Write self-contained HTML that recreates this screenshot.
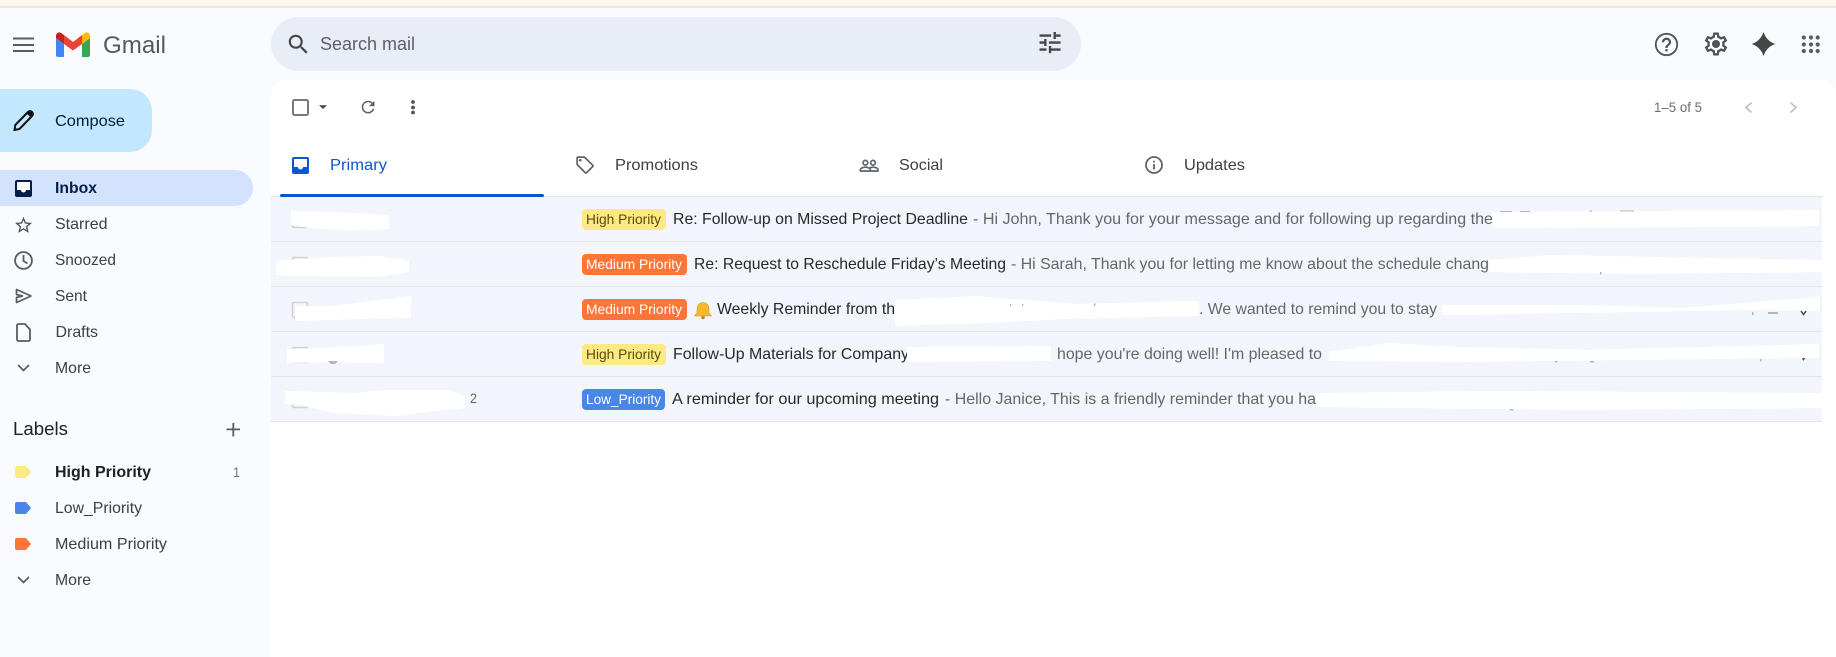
<!DOCTYPE html>
<html><head><meta charset="utf-8"><title>Gmail</title>
<style>
html,body{margin:0;padding:0;background:#f9fbff;width:1836px;height:657px;overflow:hidden}
svg{display:block;filter:blur(.35px)}
text{font-family:"Liberation Sans",sans-serif;font-size:16px;fill:#3c4043}
.s{fill:#26282b}.g{fill:#63676b}.n{fill:#3c4043}
</style></head><body>
<svg width="1836" height="657" viewBox="0 0 1836 657" xmlns="http://www.w3.org/2000/svg">
<defs>
<path id="chev" d="M-5.500-2.700 0 2.700 5.500-2.700" fill="none" stroke="#5a5d60" stroke-width="1.700"/>
</defs>
<rect width="1836" height="657" fill="#f9fbff"/>
<rect width="1836" height="6" fill="#fff5f0"/>
<rect y="6" width="1836" height="2" fill="#f9e1d8"/>

<!-- header -->
<g fill="#5a5d60"><rect x="13" y="37.500" width="21" height="2"/><rect x="13" y="44" width="21" height="2"/><rect x="13" y="50" width="21" height="2"/></g>
<path d="M58 57h6V44l-8-6v17a2 2 0 0 0 2 2z" fill="#4285f4"/>
<path d="M82 57h6a2 2 0 0 0 2-2V38l-8 6z" fill="#34a853"/>
<path d="M64 44V35l9 7 9-7v9l-9 6.500z" fill="#ea4335"/>
<path d="M64 35l-3-2c-2-1.500-5 0-5 3v2l8 6z" fill="#c5221f"/>
<path d="M82 35l3-2c2-1.500 5 0 5 3v2l-8 6z" fill="#fbbc04"/>
<text x="103" y="53" style="font-size:24px;fill:#55595d" textLength="63" lengthAdjust="spacingAndGlyphs">Gmail</text>

<rect x="271" y="17" width="810" height="54" rx="27" fill="#e9eef6"/>
<path transform="translate(285.500 31.500) scale(1.08)" fill="#444746" d="M15.500 14h-.79l-.28-.27A6.471 6.471 0 0 0 16 9.500 6.500 6.500 0 1 0 9.500 16c1.610 0 3.090-.59 4.230-1.570l.27.28v.79l5 4.990L20.490 19l-4.990-5zm-6 0C7.010 14 5 11.990 5 9.500S7.010 5 9.500 5 14 7.010 14 9.500 11.990 14 9.500 14z"/>
<text x="320" y="50" style="font-size:18px;fill:#5b5f63" textLength="95" lengthAdjust="spacingAndGlyphs">Search mail</text>
<path transform="translate(1036 28.500) scale(1.17)" fill="#444746" d="M3 17v2h6v-2H3zM3 5v2h10V5H3zm10 16v-2h8v-2h-8v-2h-2v6h2zM7 9v2H3v2h4v2h2V9H7zm14 4v-2H11v2h10zm-6-4h2V7h4V5h-4V3h-2v6z"/>

<circle cx="1666.500" cy="44.500" r="10.700" fill="none" stroke="#505356" stroke-width="1.800"/>
<path transform="translate(1652.700 30.700) scale(1.150)" fill="#505356" d="M11 18h2v-2h-2v2zM12 6c-2.210 0-4 1.790-4 4h2c0-1.100.9-2 2-2s2 .9 2 2c0 2-3 1.750-3 5h2c0-2.250 3-2.500 3-5 0-2.210-1.790-4-4-4z"/>
<g transform="translate(1702.200 30.200) scale(1.150)" fill="#505356"><path d="M19.430 12.980c.04-.32.07-.64.07-.98 0-.34-.03-.66-.07-.98l2.110-1.650c.19-.15.24-.42.12-.64l-2-3.460c-.09-.16-.26-.25-.44-.25-.06 0-.12.01-.17.03l-2.490 1c-.52-.4-1.080-.73-1.690-.98l-.38-2.650C14.460 2.180 14.250 2 14 2h-4c-.25 0-.46.18-.49.42l-.38 2.650c-.61.25-1.170.59-1.690.98l-2.490-1c-.06-.02-.12-.03-.18-.03-.17 0-.34.09-.43.25l-2 3.460c-.13.22-.07.49.12.64l2.110 1.650c-.04.32-.07.65-.07.98 0 .33.03.66.07.98l-2.110 1.650c-.19.15-.24.42-.12.64l2 3.460c.09.16.26.25.44.25.06 0 .12-.01.17-.03l2.490-1c.52.4 1.080.73 1.690.98l.38 2.650c.03.24.24.42.49.42h4c.25 0 .46-.18.49-.42l.38-2.650c.61-.25 1.170-.59 1.690-.98l2.490 1c.06.02.12.03.18.03.17 0 .34-.09.43-.25l2-3.460c.12-.22.07-.49-.12-.64l-2.110-1.650zm-1.980-1.710c.04.31.05.52.05.73 0 .21-.02.43-.05.73l-.14 1.130.89.7 1.080.84-.7 1.210-1.270-.51-1.040-.42-.9.68c-.43.32-.84.56-1.250.73l-1.060.43-.16 1.130-.2 1.350h-1.400l-.19-1.350-.16-1.130-1.060-.43c-.43-.18-.83-.41-1.230-.71l-.91-.7-1.060.43-1.270.51-.7-1.210 1.080-.84.89-.7-.14-1.130c-.03-.31-.05-.54-.05-.74s.02-.43.05-.73l.14-1.130-.89-.7-1.080-.84.7-1.210 1.270.51 1.040.42.9-.68c.43-.32.84-.56 1.250-.73l1.060-.43.16-1.130.2-1.350h1.390l.19 1.350.16 1.130 1.060.43c.43.18.83.41 1.230.71l.91.7 1.060-.43 1.270-.51.7 1.210-1.070.85-.89.7.14 1.130z"/><circle cx="12" cy="12" r="3.500"/></g>
<path d="M1763.500 32Q1766.500 41 1775.200 44 1766.500 47 1763.500 56 1760.500 47 1751.800 44 1760.500 41 1763.500 32z" fill="#444746"/>
<g fill="#5a5e62"><circle cx="1803.800" cy="37.500" r="2.100"/><circle cx="1811" cy="37.500" r="2.100"/><circle cx="1817.700" cy="37.500" r="2.100"/><circle cx="1803.800" cy="44.500" r="2.100"/><circle cx="1811" cy="44.500" r="2.100"/><circle cx="1817.700" cy="44.500" r="2.100"/><circle cx="1803.800" cy="51" r="2.100"/><circle cx="1811" cy="51" r="2.100"/><circle cx="1817.700" cy="51" r="2.100"/></g>

<!-- sidebar -->
<path d="M0 89h130a22 22 0 0 1 22 22v19a22 22 0 0 1-22 22H0z" fill="#c2e7ff"/>
<path d="M14.500 130l.8-5L28 112c1.200-1.200 2.800-1.200 4 0s1.200 2.800 0 4L19.500 129z" fill="none" stroke="#111" stroke-width="2"/>
<path d="M26.500 113.500l3.500-3.500 3.800 3.200-3.500 3.800z" fill="#111"/>
<text x="55" y="126" style="fill:#001d35" textLength="70" lengthAdjust="spacingAndGlyphs">Compose</text>

<path d="M0 170h235a18 18 0 0 1 0 36H0z" fill="#d3e3fd"/>
<path d="M17 180h13a2 2 0 0 1 2 2v13a2 2 0 0 1-2 2H17a2 2 0 0 1-2-2v-13a2 2 0 0 1 2-2z" fill="#041e49"/>
<path d="M17 182h13v8h-4a2.500 2.500 0 0 1-5 0h-4z" fill="#fff"/>
<text x="55" y="193" style="font-weight:bold;fill:#041e49" textLength="42" lengthAdjust="spacingAndGlyphs">Inbox</text>

<path transform="translate(13.300 215) scale(.85)" fill="#505356" d="M22 9.240l-7.190-.62L12 2 9.190 8.630 2 9.240l5.460 4.730L5.820 21 12 17.270 18.180 21l-1.630-7.030L22 9.240zM12 15.400l-3.760 2.270 1-4.280-3.320-2.880 4.380-.38L12 6.100l1.710 4.040 4.380.38-3.320 2.880 1 4.280L12 15.400z"/>
<text x="55" y="229" class="n" textLength="52.500" lengthAdjust="spacingAndGlyphs">Starred</text>
<circle cx="23.500" cy="260.500" r="8.400" fill="none" stroke="#5a5d60" stroke-width="1.800"/>
<path d="M23.500 255v6l4 2.500" fill="none" stroke="#5a5d60" stroke-width="1.800"/>
<text x="55" y="265" class="n" textLength="61" lengthAdjust="spacingAndGlyphs">Snoozed</text>
<path d="M16.500 289.500l14.500 6.500-14.500 6.500v-5l6-1.500-6-1.500z" fill="none" stroke="#5a5d60" stroke-width="1.700" stroke-linejoin="round"/>
<text x="55" y="301" class="n" textLength="32" lengthAdjust="spacingAndGlyphs">Sent</text>
<path d="M18.500 324h6.500l5 5.500v10a1.500 1.500 0 0 1-1.500 1.500h-10a1.500 1.500 0 0 1-1.500-1.500v-14a1.500 1.500 0 0 1 1.500-1.500z" fill="none" stroke="#5a5d60" stroke-width="1.800"/>
<text x="55.500" y="337" class="n" textLength="42.500" lengthAdjust="spacingAndGlyphs">Drafts</text>
<use href="#chev" x="23.500" y="367.700"/>
<text x="55" y="373" class="n" textLength="36" lengthAdjust="spacingAndGlyphs">More</text>

<text x="13" y="435" style="font-size:18px;fill:#202124" textLength="55" lengthAdjust="spacingAndGlyphs">Labels</text>
<path d="M226.500 428.500h13.500v1.800h-13.500zM232.400 423h1.800v13.500h-1.800z" fill="#5a5d60"/>
<path d="M17 466h9l5 6-5 6h-9a2 2 0 0 1-2-2v-8a2 2 0 0 1 2-2z" fill="#fbe983"/>
<text x="55" y="477" style="font-weight:bold;fill:#202124" textLength="96" lengthAdjust="spacingAndGlyphs">High Priority</text>
<text x="233" y="477" style="font-size:14px;fill:#6e7276" textLength="7" lengthAdjust="spacingAndGlyphs">1</text>
<path d="M17 502h9l5 6-5 6h-9a2 2 0 0 1-2-2v-8a2 2 0 0 1 2-2z" fill="#4a86e8"/>
<text x="55" y="513" class="n" textLength="87" lengthAdjust="spacingAndGlyphs">Low_Priority</text>
<path d="M17 538h9l5 6-5 6h-9a2 2 0 0 1-2-2v-8a2 2 0 0 1 2-2z" fill="#ff7537"/>
<text x="55" y="549" class="n" textLength="112" lengthAdjust="spacingAndGlyphs">Medium Priority</text>
<use href="#chev" x="23.500" y="579.700"/>
<text x="55" y="585" class="n" textLength="36" lengthAdjust="spacingAndGlyphs">More</text>

<!-- main panel -->
<path d="M287 80h1533a16 16 0 0 1 16 16V657H271V96a16 16 0 0 1 16-16z" fill="#fff"/>

<!-- toolbar -->
<rect x="293" y="100" width="15" height="15" rx="1.500" fill="none" stroke="#77797c" stroke-width="2"/>
<path d="M319 105.200h8l-4 3.800z" fill="#444746"/>
<path transform="translate(358.500 97.500) scale(.8)" fill="#5f6368" d="M17.650 6.350C16.200 4.900 14.210 4 12 4c-4.420 0-7.990 3.580-7.990 8s3.570 8 7.990 8c3.730 0 6.840-2.550 7.730-6h-2.080c-.82 2.330-3.040 4-5.650 4-3.310 0-6-2.690-6-6s2.690-6 6-6c1.660 0 3.140.69 4.220 1.780L13 11h7V4l-2.350 2.350z"/>
<g fill="#505356"><circle cx="413" cy="102" r="1.900"/><circle cx="413" cy="107.500" r="1.900"/><circle cx="413" cy="112.500" r="1.900"/></g>
<text x="1654" y="112" style="font-size:14px;fill:#6a6e72" textLength="48" lengthAdjust="spacingAndGlyphs">1–5 of 5</text>
<path d="M1751.500 102.500l-5.500 5 5.500 5M1790.500 102.500l5.500 5-5.500 5" fill="none" stroke="#c0c2c4" stroke-width="1.800"/>

<!-- tabs -->
<path d="M294 157h13a2 2 0 0 1 2 2v13a2 2 0 0 1-2 2h-13a2 2 0 0 1-2-2v-13a2 2 0 0 1 2-2z" fill="#0b57d0"/>
<path d="M294 159h13v8h-4a2.500 2.500 0 0 1-5 0h-4z" fill="#fff"/>
<text x="330" y="170" style="fill:#0b57d0" textLength="57" lengthAdjust="spacingAndGlyphs">Primary</text>
<g transform="translate(574.500 154.500) scale(.88)" fill="#5f6368"><path d="M21.410 11.580l-9-9C12.050 2.220 11.550 2 11 2H4c-1.100 0-2 .9-2 2v7c0 .55.22 1.050.59 1.420l9 9c.36.36.86.58 1.410.58.55 0 1.050-.22 1.410-.59l7-7c.37-.36.59-.86.59-1.410 0-.55-.23-1.060-.59-1.420zM13 20.010L4 11V4h7v-.01l9 9-7 7.020z"/><circle cx="6.500" cy="6.500" r="1.500"/></g>
<text x="615" y="170" class="n" textLength="83" lengthAdjust="spacingAndGlyphs">Promotions</text>
<path transform="translate(859 155.500) scale(.85)" fill="#5f6368" stroke="#5f6368" stroke-width=".5" d="M16.500 13c-1.200 0-3.070.34-4.500 1-1.430-.67-3.300-1-4.500-1C5.330 13 1 14.080 1 16.250V19h22v-2.750c0-2.170-4.330-3.250-6.500-3.250zm-4 4.500h-10v-1.250c0-.54 2.560-1.750 5-1.750s5 1.210 5 1.750v1.250zm9 0H14v-1.250c0-.46-.2-.86-.52-1.220.88-.3 1.960-.53 3.020-.53 2.440 0 5 1.210 5 1.750v1.250zM7.500 12c1.930 0 3.500-1.570 3.500-3.500S9.430 5 7.500 5 4 6.570 4 8.500 5.570 12 7.500 12zm0-5.500c1.100 0 2 .9 2 2s-.9 2-2 2-2-.9-2-2 .9-2 2-2zm9 5.500c1.930 0 3.500-1.570 3.500-3.500S18.430 5 16.500 5 13 6.570 13 8.500s1.570 3.500 3.500 3.500zm0-5.500c1.100 0 2 .9 2 2s-.9 2-2 2-2-.9-2-2 .9-2 2-2z"/>
<text x="899" y="170" class="n" textLength="44" lengthAdjust="spacingAndGlyphs">Social</text>
<circle cx="1154" cy="165" r="8" fill="none" stroke="#5f6368" stroke-width="1.800"/>
<path d="M1153.100 164h1.800v5.500h-1.800zM1153.100 160.700h1.800v1.800h-1.800z" fill="#5f6368"/>
<text x="1184" y="170" class="n" textLength="61" lengthAdjust="spacingAndGlyphs">Updates</text>

<!-- rows -->
<rect x="271" y="196" width="1551" height="226" fill="#f2f6fc"/>
<g fill="#e3e6eb"><rect x="271" y="196" width="1551" height="1"/><rect x="271" y="241" width="1551" height="1"/><rect x="271" y="286" width="1551" height="1"/><rect x="271" y="331" width="1551" height="1"/><rect x="271" y="376" width="1551" height="1"/><rect x="271" y="421" width="1551" height="1"/></g>
<rect x="280" y="194" width="264" height="3" rx="1.500" fill="#0b57d0"/>

<!-- checkboxes -->
<g fill="none" stroke="#cfd1d4" stroke-width="1.600"><rect x="292.500" y="212.500" width="15" height="15" rx="1.500"/><rect x="292.500" y="257.500" width="15" height="15" rx="1.500"/><rect x="292.500" y="302.500" width="15" height="15" rx="1.500"/><rect x="292.500" y="347.500" width="15" height="15" rx="1.500"/><rect x="292.500" y="392.500" width="15" height="15" rx="1.500"/></g>
<text x="470" y="403" style="font-size:14px;fill:#5f6368" textLength="7" lengthAdjust="spacingAndGlyphs">2</text>

<!-- badges -->
<rect x="582" y="209" width="84" height="21" rx="4" fill="#fbe983"/>
<text x="586" y="224" style="font-size:14px;fill:#594c05" textLength="75" lengthAdjust="spacingAndGlyphs">High Priority</text>
<rect x="582" y="254" width="105" height="21" rx="4" fill="#ff7537"/>
<text x="586" y="269" style="font-size:14px;fill:#fff" textLength="96" lengthAdjust="spacingAndGlyphs">Medium Priority</text>
<rect x="582" y="299" width="105" height="21" rx="4" fill="#ff7537"/>
<text x="586" y="314" style="font-size:14px;fill:#fff" textLength="96" lengthAdjust="spacingAndGlyphs">Medium Priority</text>
<rect x="582" y="344" width="84" height="21" rx="4" fill="#fbe983"/>
<text x="586" y="359" style="font-size:14px;fill:#594c05" textLength="75" lengthAdjust="spacingAndGlyphs">High Priority</text>
<rect x="582" y="389" width="83" height="21" rx="4" fill="#4a86e8"/>
<text x="586" y="404" style="font-size:14px;fill:#fff" textLength="75" lengthAdjust="spacingAndGlyphs">Low_Priority</text>

<!-- row text -->
<text x="673" y="224" class="s" textLength="295" lengthAdjust="spacingAndGlyphs">Re: Follow-up on Missed Project Deadline</text>
<text x="973" y="224" class="g" textLength="520" lengthAdjust="spacingAndGlyphs">- Hi John, Thank you for your message and for following up regarding the</text>
<text x="694" y="269" class="s" textLength="312" lengthAdjust="spacingAndGlyphs">Re: Request to Reschedule Friday’s Meeting</text>
<text x="1011" y="269" class="g" textLength="478" lengthAdjust="spacingAndGlyphs">- Hi Sarah, Thank you for letting me know about the schedule chang</text>
<path d="M703 302.500c4 0 6 3 6 7v3.500l2.500 3h-17l2.500-3v-3.500c0-4 2-7 6-7z" fill="#f5b82e" stroke="#d99a1c" stroke-width=".6"/>
<circle cx="703" cy="317.500" r="1.800" fill="#c98a14"/>
<text x="717" y="314" class="s" textLength="178" lengthAdjust="spacingAndGlyphs">Weekly Reminder from th</text>
<text x="1199" y="314" class="g" textLength="238" lengthAdjust="spacingAndGlyphs">. We wanted to remind you to stay</text>
<text x="673" y="359" class="s" textLength="236" lengthAdjust="spacingAndGlyphs">Follow-Up Materials for Company</text>
<text x="1057" y="359" class="g" textLength="265" lengthAdjust="spacingAndGlyphs">hope you're doing well! I'm pleased to</text>
<text x="672" y="404" class="s" textLength="267" lengthAdjust="spacingAndGlyphs">A reminder for our upcoming meeting</text>
<text x="945" y="404" class="g" textLength="371" lengthAdjust="spacingAndGlyphs">- Hello Janice, This is a friendly reminder that you ha</text>
<path d="M1801 311l2.500 3.500 2.500-3.500M1801 356l2.500 3.500 2.500-3.500" fill="none" stroke="#444746" stroke-width="1.500"/>

<!-- white redactions -->
<g fill="#fff">
<path d="M291 211l35 1 63 3v14l-39 2-40-3-19-3z"/>
<path d="M276 261l50-4 55-1 28 5v11l-30 5-75-1-28-1z"/>
<path d="M295 306l38 0 78-10v22l-50 1-66 2z"/>
<path d="M287 349l35-1 62-4v19l-55-1-42 1z"/>
<path d="M285 391L355 393 385 390 450 390 465 396V408L435 411 395 416 335 413 300 405 285 404z"/>
<path d="M1492 212l327-2v16l-150 1-177 1z"/>
<path d="M1489 260l60-5 273 5v12l-180 2-153-2z"/>
<path d="M895 300l80-4 100 8 124-3v15l-135 3-80 4-89 3z"/>
<path d="M1442 305l140 0 100 3 138-11v14l-70-1-118 2-190 3z"/>
<path d="M907 347l144-1v15l-144 1z"/>
<path d="M1329 352l60-9 70 4 130 3 230-6v14l-200 2-150 2-140-1z"/>
<path d="M1316 393l180-2 326 2v15l-240 2-266-3z"/>
</g>
<!-- residual glyph fragments peeking past the redactions -->
<g fill="#b4b7ba">
<rect x="1500" y="211" width="12" height="1"/><rect x="1520" y="211" width="10" height="1"/><rect x="1590" y="210.500" width="1.500" height="1.500"/><rect x="1620" y="210.500" width="14" height="1"/>
<rect x="1600" y="272" width="1.500" height="2.500"/>
<rect x="1010" y="304" width="1.200" height="2"/><rect x="1022" y="304" width="1.200" height="2"/><rect x="1094" y="303.500" width="1.500" height="2.500"/>
<rect x="1752" y="312" width="1.500" height="3"/><rect x="1768" y="312" width="10" height="2"/>
<rect x="1555" y="361" width="2.500" height="1.500"/><rect x="1590" y="361" width="4" height="1.500"/><rect x="1760" y="359" width="1.500" height="2.500"/>
<rect x="1510" y="409" width="3" height="1.500"/>
<path d="M328 361h10l-3 3h-4z"/>
</g>
</svg>
</body></html>
